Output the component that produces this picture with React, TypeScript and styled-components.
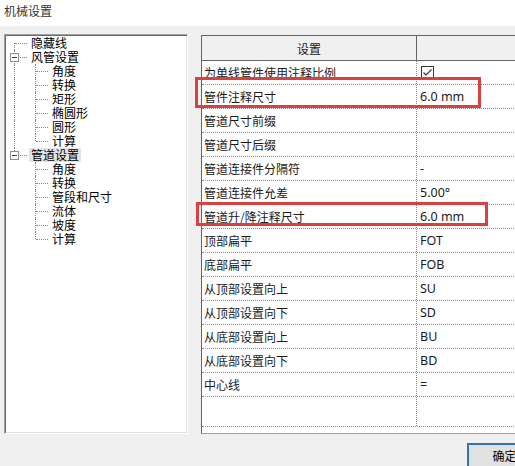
import React from "react";
import styled, { createGlobalStyle } from "styled-components";

const GlobalStyle = createGlobalStyle`
  html, body {
    margin: 0;
    padding: 0;
    width: 515px;
    height: 466px;
    overflow: hidden;
    background: #f0f0f0;
  }
`;

const Dialog = styled.div`
  width: 545px;
  height: 466px;
  display: flex;
  flex-direction: column;
  font-family: "Noto Sans CJK SC", "Noto Sans", sans-serif;
  color: #000;
`;

const TitleBar = styled.div`
  height: 26px;
  flex: none;
  background: #ffffff;
  padding-left: 4px;
  font-size: 12px;
  line-height: 22px;
  color: #333;
`;

const Body = styled.div`
  display: flex;
  align-items: flex-start;
  gap: 13px;
  padding: 8px 0 0 4px;
`;

const TreePanel = styled.div`
  box-sizing: border-box;
  width: 184px;
  height: 400px;
  flex: none;
  background: #fff;
  border: 1px solid;
  border-color: #a0a0a0 #ffffff #ffffff #a0a0a0;
  box-shadow: inset 1px 1px #696969, inset -1px -1px #e3e3e3;
  padding: 1px 0 0 1px;
`;

const TreeRow = styled.div`
  display: flex;
  align-items: center;
  height: 14px;
`;

type GutterKind = "blank" | "pipe" | "tee" | "elbow" | "first";

const Gutter = styled.span<{ $kind: GutterKind }>`
  position: relative;
  flex: none;
  width: 21px;
  height: 14px;

  &::before {
    content: "";
    display: ${(p) => (p.$kind === "blank" ? "none" : "block")};
    position: absolute;
    left: 8px;
    top: ${(p) => (p.$kind === "first" ? "7px" : "0")};
    bottom: ${(p) => (p.$kind === "elbow" ? "7px" : "0")};
    border-left: 1px dotted #8a8a8a;
  }

  &::after {
    content: "";
    display: ${(p) => (p.$kind === "blank" || p.$kind === "pipe" ? "none" : "block")};
    position: absolute;
    left: 9px;
    right: 0;
    top: 7px;
    border-top: 1px dotted #8a8a8a;
  }
`;

const ExpandBox = styled.span`
  position: absolute;
  z-index: 1;
  left: 4px;
  top: 3px;
  box-sizing: border-box;
  width: 9px;
  height: 9px;
  background: #fff;
  border: 1px solid #919191;

  &::before {
    content: "";
    position: absolute;
    left: 1px;
    right: 1px;
    top: 3px;
    border-top: 1px solid #3c3c3c;
  }
`;

const TreeLabel = styled.span<{ $selected?: boolean }>`
  margin-left: 2px;
  padding: 0 2px;
  font-size: 12px;
  line-height: 14px;
  height: 14px;
  white-space: nowrap;
  background: ${(p) => (p.$selected ? "#e3e3e3" : "transparent")};
`;

const GridPanel = styled.div`
  position: relative;
  box-sizing: border-box;
  flex: 1;
  height: 399px;
  margin-top: 1px;
  background: #fff;
  border: 1px solid;
  border-color: #646464 #e3e3e3 #a0a0a0 #646464;
`;

const HeaderRow = styled.div`
  display: grid;
  grid-template-columns: 215px 1fr;
  height: 25px;
  box-sizing: border-box;
  background: #f0f0f0;
  border-bottom: 1px solid #646464;
`;

const HeaderCell = styled.div<{ $last?: boolean }>`
  display: flex;
  align-items: center;
  justify-content: center;
  font-size: 12px;
  color: #1a1a1a;
  border-right: ${(p) => (p.$last ? "none" : "1px solid #646464")};
`;

const Row = styled.div<{ $height?: number }>`
  display: grid;
  grid-template-columns: 215px 1fr;
  box-sizing: border-box;
  height: ${(p) => p.$height ?? 24}px;
  border-bottom: 1px dotted #8a8a8a;
`;

const LabelCell = styled.div`
  display: flex;
  align-items: center;
  padding-left: 2px;
  font-size: 12px;
  color: #1a1a1a;
  white-space: nowrap;
  border-right: 1px dotted #8a8a8a;
`;

const ValueCell = styled.div`
  display: flex;
  align-items: center;
  padding-left: 3px;
  font-family: "Noto Sans", "Noto Sans CJK SC", sans-serif;
  font-size: 12.5px;
  color: #1a1a1a;
  white-space: nowrap;
`;

const Highlight = styled.div<{ $left: number; $top: number; $width: number; $height: number }>`
  position: absolute;
  box-sizing: border-box;
  left: ${(p) => p.$left}px;
  top: ${(p) => p.$top}px;
  width: ${(p) => p.$width}px;
  height: ${(p) => p.$height}px;
  border: 3px solid #d9403f;
  pointer-events: none;
`;

const Footer = styled.div`
  display: flex;
  justify-content: flex-end;
  padding: 9px 3px 0 0;
`;

const Button = styled.button`
  box-sizing: border-box;
  width: 75px;
  height: 25px;
  background: #e1e1e1;
  border: 2px solid #3474a9;
  font-family: "Noto Sans CJK SC", sans-serif;
  font-size: 12px;
  color: #000;
  padding: 0;
`;

const CheckBox = () => (
  <svg width="13" height="13" viewBox="0 0 13 13" style={{ marginLeft: 1 }}>
    <rect x="0.5" y="0.5" width="12" height="12" fill="#fff" stroke="#333" />
    <path d="M2.5 6.5 L5 9 L10.5 3.5" fill="none" stroke="#333" strokeWidth="1.2" />
  </svg>
);

type TreeNode = { label: string; selected?: boolean; children?: string[] };

const tree: TreeNode[] = [
  { label: "隐藏线" },
  { label: "风管设置", children: ["角度", "转换", "矩形", "椭圆形", "圆形", "计算"] },
  {
    label: "管道设置",
    selected: true,
    children: ["角度", "转换", "管段和尺寸", "流体", "坡度", "计算"],
  },
];

const settings: [string, React.ReactNode][] = [
  ["为单线管件使用注释比例", <CheckBox />],
  ["管件注释尺寸", "6.0 mm"],
  ["管道尺寸前缀", ""],
  ["管道尺寸后缀", ""],
  ["管道连接件分隔符", "-"],
  ["管道连接件允差", "5.00°"],
  ["管道升/降注释尺寸", "6.0 mm"],
  ["顶部扁平", "FOT"],
  ["底部扁平", "FOB"],
  ["从顶部设置向上", "SU"],
  ["从顶部设置向下", "SD"],
  ["从底部设置向上", "BU"],
  ["从底部设置向下", "BD"],
  ["中心线", "="],
];

const Tree = () => {
  const rows: React.ReactNode[] = [];
  tree.forEach((node, i) => {
    const isLast = i === tree.length - 1;
    const kind: GutterKind = i === 0 ? "first" : isLast ? "elbow" : "tee";
    rows.push(
      <TreeRow key={node.label}>
        <Gutter $kind={kind}>{node.children && <ExpandBox />}</Gutter>
        <TreeLabel $selected={node.selected}>{node.label}</TreeLabel>
      </TreeRow>
    );
    node.children?.forEach((child, j) => {
      const lastChild = j === node.children!.length - 1;
      rows.push(
        <TreeRow key={node.label + child}>
          <Gutter $kind={isLast ? "blank" : "pipe"} />
          <Gutter $kind={lastChild ? "elbow" : "tee"} />
          <TreeLabel>{child}</TreeLabel>
        </TreeRow>
      );
    });
  });
  return <TreePanel>{rows}</TreePanel>;
};

export default function App() {
  return (
    <>
      <GlobalStyle />
      <Dialog>
        <TitleBar>机械设置</TitleBar>
        <Body>
          <Tree />
          <GridPanel>
            <HeaderRow>
              <HeaderCell>设置</HeaderCell>
              <HeaderCell $last />
            </HeaderRow>
            {settings.map(([label, value]) => (
              <Row key={label}>
                <LabelCell>{label}</LabelCell>
                <ValueCell>{value}</ValueCell>
              </Row>
            ))}
            <Row $height={30}>
              <LabelCell />
              <ValueCell />
            </Row>
            <Highlight $left={-7} $top={41} $width={286} $height={31} />
            <Highlight $left={-6} $top={166} $width={292} $height={24} />
          </GridPanel>
        </Body>
        <Footer>
          <Button>确定</Button>
        </Footer>
      </Dialog>
    </>
  );
}
